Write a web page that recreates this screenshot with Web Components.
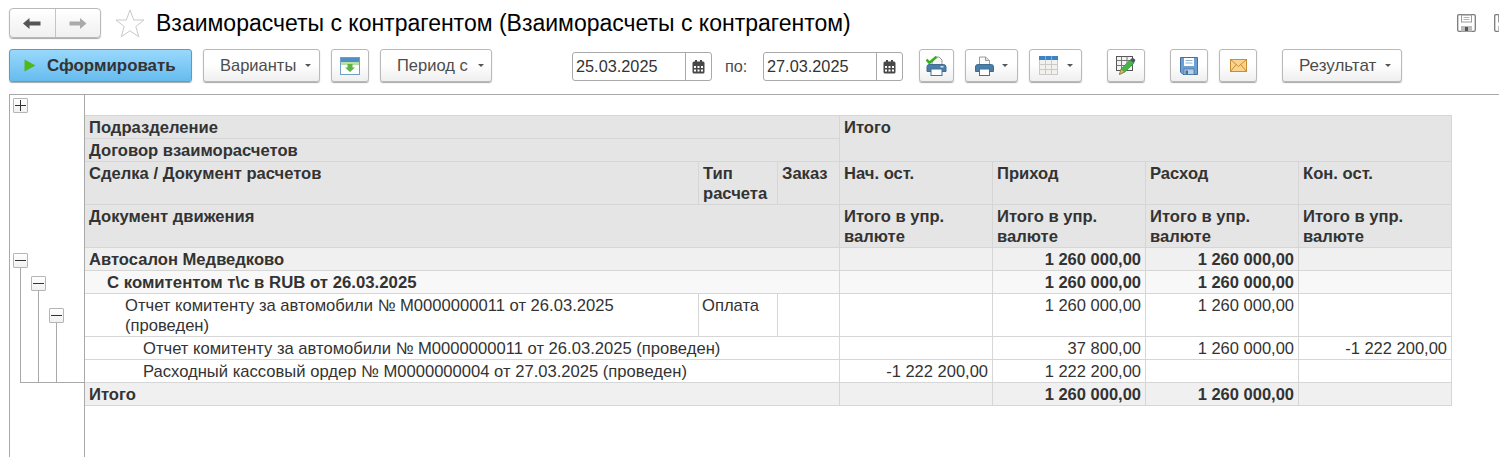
<!DOCTYPE html>
<html lang="ru"><head><meta charset="utf-8"><title>Взаиморасчеты</title>
<style>html,body{margin:0;padding:0;background:#fff;overflow:hidden;height:457px}</style></head>
<body>
<x-app></x-app>
<script>
const ICONS={
back:'<svg width="18" height="11" viewBox="0 0 18 11"><path d="M0 5.5L6.5 0V3.5H17.5V7.5H6.5V11Z" fill="#555"/></svg>',
fwd:'<svg width="18" height="11" viewBox="0 0 18 11"><path d="M17.5 5.5L11 0V3.5H0.5V7.5H11V11Z" fill="#aaa"/></svg>',
play:'<svg width="12" height="13" viewBox="0 0 12 13"><path d="M0.5 0.5L11.5 6.5L0.5 12.5Z" fill="#4fb81c"/></svg>',
report:'<svg width="20" height="18" viewBox="0 0 20 18"><rect x=".5" y=".5" width="19" height="17" fill="#fff" stroke="#6f9fc4"/><rect x="1" y="1" width="18" height="4" fill="#4f8fc4"/><rect x="1" y="5" width="18" height="3" fill="#b7dfa6"/><path d="M7.5 7H12.5V10.5H15L10 15L5 10.5H7.5Z" fill="#5cb445"/></svg>',
cal:'<svg width="13" height="14" viewBox="0 0 13 14"><rect x="0.5" y="1.5" width="12" height="12" rx="1.5" fill="#484848"/><rect x="3" y="0" width="2" height="3" fill="#484848"/><rect x="8" y="0" width="2" height="3" fill="#484848"/><g fill="#fff"><rect x="2" y="6" width="2" height="2"/><rect x="5.5" y="6" width="2" height="2"/><rect x="9" y="6" width="2" height="2"/><rect x="2" y="9.500" width="2" height="2"/><rect x="5.5" y="9.500" width="2" height="2"/><rect x="9" y="9.500" width="2" height="2"/></g></svg>',
printcheck:'<svg width="21" height="20" viewBox="0 0 21 20"><path d="M6 7L9 1H13L16 4V9H6Z" fill="#f5f5f5" stroke="#9a9a9a"/><path d="M3 8.500H17.500Q20 8.500 20 11V15.500H1V11Q1 8.500 3 8.500Z" fill="#4b7ea6" stroke="#3f6d91"/><rect x="5" y="13" width="11" height="6.500" fill="#fff" stroke="#41719a"/><rect x="14.500" y="10" width="3" height="1.500" fill="#cfe0ee"/><path d="M0.500 3.500L3.500 6.800L10.500 0.800" fill="none" stroke="#36b11c" stroke-width="2.600"/></svg>',
print:'<svg width="19" height="20" viewBox="0 0 19 20"><path d="M4.500 9V1H10.500L14.500 4.500V9Z" fill="#fafafa" stroke="#9a9a9a"/><path d="M10.500 1V4.500H14.500" fill="#ddd" stroke="#9a9a9a"/><path d="M2.500 8.500H16.500Q18.500 8.500 18.500 11V15.500H0.500V11Q0.500 8.500 2.500 8.500Z" fill="#4b7ea6" stroke="#3f6d91"/><rect x="4.500" y="13" width="10" height="6.500" fill="#fff" stroke="#41719a"/></svg>',
table:'<svg width="19" height="19" viewBox="0 0 19 19"><rect x=".5" y=".5" width="18" height="18" fill="#f2f1ee" stroke="#c9c9c9"/><rect x="0" y="0" width="19" height="4" fill="#3d83c3"/><path d="M6.500 4V18.500M12.500 4V18.500M.5 8.500H18.500M.5 13.500H18.500" stroke="#c9c9c9"/><path d="M6.500 0V4M12.500 0V4" stroke="#7fb0dc"/></svg>',
edit:'<svg width="20" height="19" viewBox="0 0 20 19"><rect x=".5" y=".5" width="16" height="14" fill="#f3f3f3" stroke="#555"/><path d="M.5 4.500H16.500M.5 9.500H16.500M5.500 .5V14.500M11 .5V14.500" stroke="#777"/><path d="M3.500 18.500L5 13L14 4L18 7L9 16Z" fill="#45b54a" stroke="#2f8f36" stroke-width=".6"/><path d="M3.500 18.500L5 13L8.500 15.800Z" fill="#e2b872" stroke="#8b6b3a" stroke-width=".6"/><path d="M14 4L15.800 2.200Q16.500 1.500 17.500 2.200L19 3.500Q19.800 4.300 19 5L18 7Z" fill="#4d5560"/></svg>',
save:'<svg width="18" height="18" viewBox="0 0 18 18"><path d="M.5 .5H17.500V17.500H3L.5 15Z" fill="#6e9fd2" stroke="#41719f"/><rect x="4" y="1" width="10" height="8" fill="#fff"/><path d="M5.500 3.500H12.500M5.500 6H12.500" stroke="#8fb3d6"/><rect x="4" y="12" width="10" height="5.500" fill="#b9cfe4" stroke="#41719f" stroke-width=".7"/><rect x="5.500" y="13.500" width="2.500" height="3.500" fill="#41719f"/></svg>',
mail:'<svg width="17" height="13" viewBox="0 0 17 13"><rect x=".5" y=".5" width="16" height="12" fill="#fbd38c" stroke="#c98e32"/><path d="M.5 .5L8.500 7.500L16.500 .5M.5 12.500L6.200 5.500M16.500 12.500L10.800 5.500" fill="none" stroke="#c98e32"/></svg>',
saveg:'<svg width="19" height="18" viewBox="0 0 19 18"><path d="M2 .7H17Q18.300 .7 18.300 2V15.700Q18.300 17.300 17 17.300H2Q.7 17.300 .7 15.700V2Q.7 .7 2 .7Z" fill="none" stroke="#7b7b7b" stroke-width="1.300"/><rect x="4.500" y="1" width="10" height="7" fill="none" stroke="#9a9a9a"/><path d="M6.500 3.500H12.500M6.500 5.500H12.500" stroke="#b5b5b5"/><rect x="4" y="12" width="11" height="5.500" fill="#bbb"/><rect x="8" y="13" width="3" height="4" fill="#555"/></svg>',
star:'<svg width="30" height="29" viewBox="0 0 30 29"><path d="M15 1L18.700 11H29L20.800 17.500L23.800 27.800L15 21.800L6.200 27.800L9.200 17.500L1 11H11.300Z" fill="#fff" stroke="#c9c9c9"/></svg>'
};
class XIcon extends HTMLElement{constructor(){super();this.attachShadow({mode:'open'}).innerHTML='<style>:host{display:inline-flex;line-height:0}</style>'+(ICONS[this.getAttribute('name')]||'')}}
customElements.define('x-icon',XIcon);

class XBtn extends HTMLElement{constructor(){super();const caret=this.hasAttribute('caret');
this.attachShadow({mode:'open'}).innerHTML=`<style>
:host{display:inline-flex;box-sizing:border-box;height:33px;align-items:center;justify-content:center;border:1px solid #b9b9b9;border-radius:3px;background:linear-gradient(#fff,#fff 45%,#efefef);box-shadow:0 1px 1px #a8a8a8;font:16.5px "Liberation Sans",Arial,sans-serif;color:#4d4d4d;white-space:nowrap;flex:none}
:host([text]){justify-content:flex-start;padding-left:16px}
:host([primary]){background:linear-gradient(#99d8fd,#66bcee);border-color:#5b9cc4;font-weight:bold;font-size:16.9px;color:#333;justify-content:flex-start}
.c{width:0;height:0;border:3px solid transparent;border-top:3px solid #555;border-bottom:0;margin-left:var(--cm,9px)}
</style><slot></slot>${caret?'<span class="c"></span>':''}`}}
customElements.define('x-btn',XBtn);

class XDate extends HTMLElement{constructor(){super();this.attachShadow({mode:'open'}).innerHTML=`<style>
:host{display:flex;box-sizing:border-box;width:140px;height:29px;margin-top:2px;border:1px solid #a9a9a9;border-radius:3px;background:#fff;font:16.3px/27px "Liberation Sans",Arial,sans-serif;color:#333;flex:none}
.v{flex:1;padding-left:3px}.b{width:25px;border-left:1px solid #a9a9a9;display:flex;align-items:center;justify-content:center}
</style><div class="v"><slot></slot></div><div class="b"><x-icon name="cal"></x-icon></div>`}}
customElements.define('x-date',XDate);

class XTitlebar extends HTMLElement{constructor(){super();this.attachShadow({mode:'open'}).innerHTML=`<style>
:host{display:flex;align-items:center;height:30px;margin:8px 0 0 9px;position:relative}
.nav{box-sizing:border-box;width:92px;height:30px;display:flex;border:1px solid #b9b9b9;border-radius:4px;background:linear-gradient(#fff,#f0f0f0);box-shadow:0 1px 1px #a8a8a8}
.nav div{flex:1;display:flex;align-items:center;justify-content:center}.nav div+div{border-left:1px solid #c4c4c4}
x-icon[name=star]{margin-left:14px}
h1{margin:0 0 0 11px;font:normal 23px/30px "Liberation Sans",Arial,sans-serif;color:#000;white-space:nowrap;flex:1}
.r{display:flex;gap:18px;margin-top:-1px;flex:none;width:42px;overflow:hidden}
</style><div class="nav"><div><x-icon name="back"></x-icon></div><div><x-icon name="fwd"></x-icon></div></div>
<x-icon name="star"></x-icon><h1><slot></slot></h1><div class="r"><x-icon name="saveg"></x-icon><x-icon name="saveg"></x-icon></div>`}}
customElements.define('x-titlebar',XTitlebar);

class XToolbar extends HTMLElement{constructor(){super();this.attachShadow({mode:'open'}).innerHTML=`<style>
:host{display:flex;align-items:center;height:33px;margin:11px 0 0 9px}
</style><slot></slot>`}}
customElements.define('x-toolbar',XToolbar);

const n='1\u00a0260\u00a0000,00';
class XReport extends HTMLElement{constructor(){super();this.attachShadow({mode:'open'}).innerHTML=`<style>
:host{display:flex;margin:12px 0 0 9px;height:363px;border-top:1px solid #a9a9a9;box-sizing:border-box;font:16.6px/20px "Liberation Sans",Arial,sans-serif;color:#333}
.g{width:76px;box-sizing:border-box;border-left:1px solid #a9a9a9;border-right:1px solid #a9a9a9;flex:none;position:relative}
.box{position:absolute;box-sizing:border-box;width:15px;height:15px;left:3px;border:1px solid #b5b5b5;background:linear-gradient(#fff,#f1f1f1);border-radius:1px}
.box::before{content:"";position:absolute;left:1px;right:1px;top:6px;height:1px;background:#333}
.plus::after{content:"";position:absolute;top:1px;bottom:1px;left:6px;width:1px;background:#333}
.vl{position:absolute;width:1px;background:#a9a9a9}.hl{position:absolute;height:1px;background:#a9a9a9}
.t{padding-top:20px;flex:none}
table{border-collapse:separate;border-spacing:0;table-layout:fixed;width:1367px;border-top:1px solid #d6d6d6}
td{box-sizing:border-box;padding:2px 4px 0 4px;border-right:1px solid #d6d6d6;border-bottom:1px solid #d6d6d6;vertical-align:top;overflow:hidden}
.h td{background:#e5e5e5;font-weight:bold}
.g1 td{background:#f0f0f0;font-weight:bold}.g2 td{background:#f8f8f8;font-weight:bold}
.g2 td.i1{font-size:16.75px}
td.r{text-align:right;font-size:16.5px;padding-top:1px;padding-bottom:1px}
.i1{padding-left:22px}.i2{padding-left:40px}.i3{padding-left:58px}
</style>
<div class="g">
<span class="vl" style="left:10px;top:171px;height:116px"></span>
<span class="vl" style="left:28px;top:194px;height:93px"></span>
<span class="vl" style="left:46px;top:227px;height:60px"></span>
<span class="hl" style="left:10px;top:287px;width:65px"></span>
<span class="box plus" style="top:3px"></span>
<span class="box" style="top:158px"></span>
<span class="box" style="top:181px;left:21px"></span>
<span class="box" style="top:213px;left:39px"></span>
</div>
<div class="t"><table>
<colgroup><col style="width:614px"><col style="width:79px"><col style="width:62px"><col style="width:153px"><col style="width:153px"><col style="width:153px"><col style="width:153px"></colgroup>
<tr class="h"><td colspan="3">Подразделение</td><td colspan="4" rowspan="2">Итого</td></tr>
<tr class="h"><td colspan="3">Договор взаиморасчетов</td></tr>
<tr class="h"><td>Сделка / Документ расчетов</td><td>Тип расчета</td><td>Заказ</td><td>Нач. ост.</td><td>Приход</td><td>Расход</td><td>Кон. ост.</td></tr>
<tr class="h"><td colspan="3">Документ движения</td><td>Итого в упр. валюте</td><td>Итого в упр. валюте</td><td>Итого в упр. валюте</td><td>Итого в упр. валюте</td></tr>
<tr class="g1"><td colspan="3">Автосалон Медведково</td><td></td><td class="r">${n}</td><td class="r">${n}</td><td></td></tr>
<tr class="g2"><td colspan="3" class="i1">С комитентом т\\с в RUB от 26.03.2025</td><td></td><td class="r">${n}</td><td class="r">${n}</td><td></td></tr>
<tr><td class="i2">Отчет комитенту за автомобили № М0000000011 от 26.03.2025 (проведен)</td><td style="padding-left:3px">Оплата</td><td></td><td></td><td class="r">${n}</td><td class="r">${n}</td><td></td></tr>
<tr><td colspan="3" class="i3">Отчет комитенту за автомобили № М0000000011 от 26.03.2025 (проведен)</td><td></td><td class="r">37\u00a0800,00</td><td class="r">${n}</td><td class="r">-1\u00a0222\u00a0200,00</td></tr>
<tr><td colspan="3" class="i3">Расходный кассовый ордер № М0000000004 от 27.03.2025 (проведен)</td><td class="r">-1\u00a0222\u00a0200,00</td><td class="r">1\u00a0222\u00a0200,00</td><td></td><td></td></tr>
<tr class="g1"><td colspan="3">Итого</td><td></td><td class="r">${n}</td><td class="r">${n}</td><td></td></tr>
</table></div>`}}
customElements.define('x-report',XReport);

class XApp extends HTMLElement{constructor(){super();this.attachShadow({mode:'open'}).innerHTML=`<style>
:host{display:block;width:1499px;height:457px;overflow:hidden}
.l{font:16.3px "Liberation Sans",Arial,sans-serif;color:#4d4d4d;margin-top:2px}
</style>
<x-titlebar>Взаиморасчеты с контрагентом (Взаиморасчеты с контрагентом)</x-titlebar>
<x-toolbar>
<x-btn primary style="width:183px;padding-left:14px"><x-icon name="play" style="margin-right:11px"></x-icon>Сформировать</x-btn>
<x-btn text caret style="width:117px;margin-left:11px">Варианты</x-btn>
<x-btn style="width:38px;margin-left:11px"><x-icon name="report"></x-icon></x-btn>
<x-btn text caret style="width:112px;margin-left:11px;--cm:10px">Период с</x-btn>
<x-date style="margin-left:80px">25.03.2025</x-date>
<span class="l" style="margin-left:13px;width:38px;flex:none">по:</span>
<x-date>27.03.2025</x-date>
<x-btn style="width:35px;margin-left:16px"><x-icon name="printcheck"></x-icon></x-btn>
<x-btn caret style="width:53px;margin-left:11px;--cm:8px"><x-icon name="print"></x-icon></x-btn>
<x-btn caret style="width:53px;margin-left:11px;--cm:9px"><x-icon name="table"></x-icon></x-btn>
<x-btn style="width:38px;margin-left:25px"><x-icon name="edit"></x-icon></x-btn>
<x-btn style="width:38px;margin-left:25px"><x-icon name="save"></x-icon></x-btn>
<x-btn style="width:38px;margin-left:11px"><x-icon name="mail"></x-icon></x-btn>
<x-btn text caret style="width:120px;margin-left:25px;font-size:17px">Результат</x-btn>
</x-toolbar>
<x-report></x-report>`}}
customElements.define('x-app',XApp);
</script>
</body></html>
